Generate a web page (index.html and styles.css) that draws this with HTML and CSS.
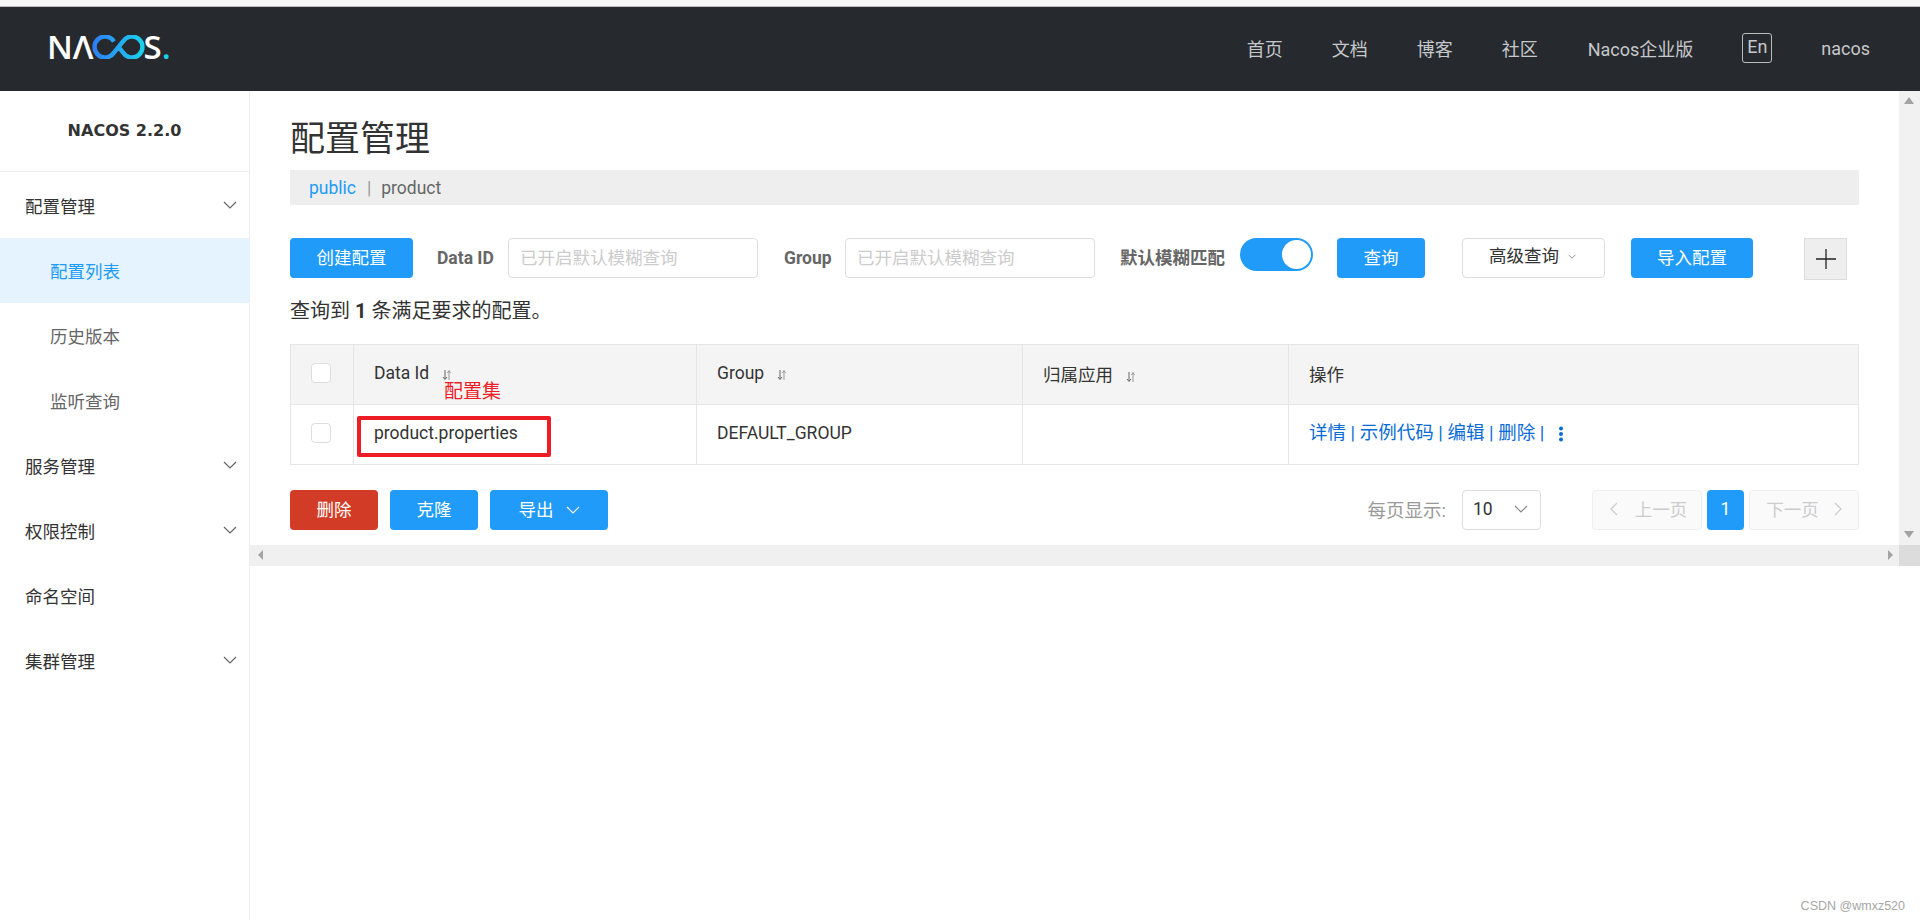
FILE: index.html
```html
<!DOCTYPE html>
<html lang="zh-CN">
<head>
  <meta charset="UTF-8" />
  <title>配置管理 - Nacos</title>
  <link rel="stylesheet" href="styles.css">
</head>
<body>
  <svg class="sprites" width="0" height="0">
    <symbol id="chevron" viewBox="0 0 14 8"><path d="M1 1l6 6 6-6" fill="none" stroke="currentColor" stroke-width="1.2"/></symbol>
    <symbol id="sort" viewBox="0 0 10 12"><path d="M3 1v9M1 8l2 2.5L5 8" fill="none" stroke="#666" stroke-width="1"/><path d="M7 11V2M5.4 4L7 1.5 8.6 4" fill="none" stroke="#999" stroke-width="1"/></symbol>
  </svg>

  <div class="top-strip"></div>

  <header class="header">
    <a class="logo">
      <span>N</span><span>Λ</span>
      <svg class="logo-loop" width="53" height="24" viewBox="0 0 53 24">
        <defs>
          <linearGradient id="loop" x1="0" y1="0" x2="1" y2="0">
            <stop offset="0" stop-color="#2e7ff5"/>
            <stop offset="1" stop-color="#1cd0ec"/>
          </linearGradient>
        </defs>
        <path d="M22 6.500A10.500 10.500 0 1 0 22 17.500L31 6.500A10.500 10.500 0 1 1 31 17.500L27.500 13.200" fill="none" stroke="url(#loop)" stroke-width="4.400"/>
      </svg>
      <span>S</span><span class="logo-dot">.</span>
    </a>
    <nav class="nav">
      <a class="nav-home">首页</a>
      <a class="nav-docs">文档</a>
      <a class="nav-blog">博客</a>
      <a class="nav-community">社区</a>
      <a class="nav-enterprise">Nacos企业版</a>
      <a class="nav-lang">En</a>
      <a class="nav-user">nacos</a>
    </nav>
  </header>

  <div class="layout">
    <aside class="sidebar">
      <div class="version">NACOS 2.2.0</div>
      <ul class="menu">
        <li class="menu-item">配置管理<svg class="menu-arrow"><use href="#chevron"/></svg></li>
        <li class="menu-item sub active">配置列表</li>
        <li class="menu-item sub">历史版本</li>
        <li class="menu-item sub">监听查询</li>
        <li class="menu-item">服务管理<svg class="menu-arrow"><use href="#chevron"/></svg></li>
        <li class="menu-item">权限控制<svg class="menu-arrow"><use href="#chevron"/></svg></li>
        <li class="menu-item">命名空间</li>
        <li class="menu-item">集群管理<svg class="menu-arrow"><use href="#chevron"/></svg></li>
      </ul>
    </aside>

    <div class="main">
      <div class="viewport">
        <main class="content">
          <h1 class="page-title">配置管理</h1>
          <div class="crumbs">
            <a class="crumb-link">public</a>
            <span class="crumb-sep">|</span>
            <span>product</span>
          </div>

          <div class="toolbar">
            <button class="btn btn-create">创建配置</button>
            <label class="field-label label-id">Data ID</label>
            <div class="input">已开启默认模糊查询</div>
            <label class="field-label label-group">Group</label>
            <div class="input">已开启默认模糊查询</div>
            <label class="field-label label-fuzzy">默认模糊匹配</label>
            <span class="switch"><span class="switch-knob"></span></span>
            <button class="btn btn-query">查询</button>
            <button class="btn-advanced">高级查询<svg class="advanced-arrow"><use href="#chevron"/></svg></button>
            <button class="btn btn-import">导入配置</button>
            <button class="btn-plus">
              <svg width="20" height="20" viewBox="0 0 20 20"><path d="M10 0v20M0 10h20" stroke="#222" stroke-width="1.300"/></svg>
            </button>
          </div>

          <p class="result-count">查询到 <b>1</b> 条满足要求的配置。</p>

          <div class="table-wrap">
            <table class="config-table">
              <colgroup>
                <col class="col-check"><col class="col-id"><col class="col-group"><col class="col-app"><col>
              </colgroup>
              <thead>
                <tr>
                  <th class="cell-check"><span class="checkbox"></span></th>
                  <th>Data Id<svg class="sort"><use href="#sort"/></svg></th>
                  <th>Group<svg class="sort"><use href="#sort"/></svg></th>
                  <th>归属应用<svg class="sort"><use href="#sort"/></svg></th>
                  <th>操作</th>
                </tr>
              </thead>
              <tbody>
                <tr>
                  <td class="cell-check"><span class="checkbox"></span></td>
                  <td>product.properties</td>
                  <td>DEFAULT_GROUP</td>
                  <td></td>
                  <td class="actions">
                    <a>详情</a> | <a>示例代码</a> | <a>编辑</a> | <a>删除</a> |
                    <svg class="kebab" width="6" height="16" viewBox="0 0 6 16"><circle cx="3" cy="2.500" r="2"/><circle cx="3" cy="8" r="2"/><circle cx="3" cy="13.500" r="2"/></svg>
                  </td>
                </tr>
              </tbody>
            </table>
            <!-- 标注 -->
            <span class="mark-label">配置集</span>
            <span class="mark-box"></span>
          </div>

          <div class="table-foot">
            <button class="btn btn-danger">删除</button>
            <button class="btn btn-clone">克隆</button>
            <button class="btn btn-export">导出<svg class="export-arrow"><use href="#chevron"/></svg></button>
            <span class="page-size-label">每页显示:</span>
            <span class="page-size">10<svg class="page-size-arrow"><use href="#chevron"/></svg></span>
            <button class="page-btn page-prev"><svg class="page-arrow" viewBox="0 0 8 14"><path d="M7 1L1 7l6 6" fill="none" stroke="currentColor" stroke-width="1.200"/></svg>上一页</button>
            <button class="btn page-current">1</button>
            <button class="page-btn page-next">下一页<svg class="page-arrow" viewBox="0 0 8 14"><path d="M1 1l6 6-6 6" fill="none" stroke="currentColor" stroke-width="1.200"/></svg></button>
          </div>
        </main>
        <div class="vscroll">
          <span class="tri tri-up"></span>
          <span class="tri tri-down"></span>
        </div>
      </div>
      <div class="hscroll">
        <span class="tri tri-left"></span>
        <span class="tri tri-right"></span>
        <span class="scroll-corner"></span>
      </div>
      <div class="watermark">CSDN @wmxz520</div>
    </div>
  </div>
</body>
</html>
```

FILE: styles.css
```css
* {
  box-sizing: border-box;
}
html, body {
  height: 100%;
}
body {
  margin: 0;
  display: flex;
  flex-direction: column;
  overflow: hidden;
  font-family: Roboto, "Noto Sans CJK SC", sans-serif;
  font-size: 17.5px;
  color: #333;
  background: #fff;
}
.sprites {
  position: absolute;
}
button {
  font: inherit;
  cursor: pointer;
}

.top-strip {
  height: 7px;
  flex: none;
  background: #f6f6f6;
  border-bottom: 1px solid #bbb;
}

/* 顶部导航 */
.header {
  height: 84px;
  flex: none;
  display: flex;
  align-items: center;
  background: #262a2f;
  color: #c6c8ca;
}
.logo {
  display: flex;
  align-items: center;
  margin: 0 0 4px 47px;
  height: 24px;
  font-family: "Open Sans", sans-serif;
  font-weight: 600;
  font-size: 33px;
  line-height: 24px;
  color: #fff;
}
.logo-loop {
  margin: 0 -1px 0 -2px;
  flex: none;
}
.logo-dot {
  color: #1cd0ec;
}
.nav {
  margin: 0 0 2px auto;
  display: flex;
  align-items: center;
  font-size: 18px;
  padding-right: 50px;
}
.nav-docs, .nav-blog, .nav-community {
  margin-left: 49px;
}
.nav-enterprise {
  margin-left: 50px;
}
.nav-lang {
  margin-left: 49px;
  width: 30px;
  height: 30px;
  line-height: 26px;
  text-align: center;
  border: 1px solid #bbb;
  border-radius: 3px;
}
.nav-user {
  margin-left: 49px;
}

.layout {
  flex: 1;
  display: flex;
  min-height: 0;
}

/* 侧边栏 */
.sidebar {
  width: 250px;
  flex: none;
  border-right: 1px solid #eee;
}
.version {
  height: 81px;
  line-height: 79px;
  text-align: center;
  font-family: "DejaVu Sans", sans-serif;
  font-weight: bold;
  font-size: 16px;
  color: #333;
  border-bottom: 1px solid #eee;
}
.menu {
  list-style: none;
  margin: 0;
  padding: 1px 0 0;
}
.menu-item {
  height: 65px;
  display: flex;
  align-items: center;
  justify-content: space-between;
  padding: 0 12px 1px 25px;
  color: #333;
}
.menu-item.sub {
  padding-left: 50px;
  color: #666;
}
.menu-item.active {
  background: #e4f3fe;
  color: #209bfa;
}
.menu-arrow {
  width: 14px;
  height: 8px;
  color: #666;
}

.main {
  flex: 1;
  min-width: 0;
  position: relative;
}
.viewport {
  height: 454px;
  display: flex;
}
.content {
  flex: 1;
  min-width: 0;
  padding: 0 40px;
}
.page-title {
  margin: 0;
  height: 79px;
  line-height: 97px;
  font-size: 35px;
  font-weight: 400;
  color: #333;
}
.crumbs {
  height: 35px;
  display: flex;
  align-items: center;
  padding-left: 19px;
  background: #eee;
  color: #666;
}
.crumb-link {
  color: #209bfa;
}
.crumb-sep {
  margin: 0 10px 0 11px;
  color: #999;
}

/* 查询栏 */
.toolbar {
  display: flex;
  align-items: flex-start;
  margin-top: 33px;
  height: 42px;
}
.btn {
  height: 40px;
  border: none;
  border-radius: 4px;
  background: #209bfa;
  color: #fff;
  padding: 0 0 3px;
}
.btn-create {
  width: 123px;
}
.field-label {
  height: 40px;
  line-height: 40px;
  font-weight: bold;
  color: #666;
  flex: none;
}
.label-id {
  width: 71px;
  margin-left: 24px;
}
.label-group {
  width: 61px;
  margin-left: 26px;
}
.label-fuzzy {
  width: 120px;
  margin-left: 25px;
}
.input {
  width: 250px;
  height: 40px;
  line-height: 38px;
  padding-left: 11px;
  border: 1px solid #ddd;
  border-radius: 4px;
  color: #ccc;
  flex: none;
}
.switch {
  width: 73px;
  height: 33px;
  flex: none;
  border-radius: 17px;
  background: #209bfa;
  padding: 2px;
  display: flex;
  justify-content: flex-end;
}
.switch-knob {
  width: 29px;
  height: 29px;
  border-radius: 50%;
  background: #fff;
}
.btn-query {
  width: 88px;
  margin-left: 24px;
}
.btn-advanced {
  width: 143px;
  height: 40px;
  margin-left: 37px;
  border: 1px solid #ddd;
  border-radius: 4px;
  background: #fff;
  color: #333;
  padding: 0 2px 8px 0;
}
.advanced-arrow {
  width: 8px;
  height: 5px;
  margin-left: 9px;
  vertical-align: 3px;
  color: #666;
}
.btn-import {
  width: 122px;
  margin-left: 26px;
}
.btn-plus {
  width: 43px;
  height: 42px;
  margin-left: 51px;
  padding: 0;
  border: 1px solid #ddd;
  background: #eee;
  display: flex;
  align-items: center;
  justify-content: center;
}

.result-count {
  margin: 19px 0 0;
  height: 45px;
  line-height: 24px;
  font-size: 20px;
}

/* 表格 */
.table-wrap {
  position: relative;
}
.config-table {
  width: 100%;
  table-layout: fixed;
  border-collapse: collapse;
}
.col-check {
  width: 63px;
}
.col-id {
  width: 343px;
}
.col-group {
  width: 326px;
}
.col-app {
  width: 266px;
}
.config-table th, .config-table td {
  height: 60px;
  padding: 0 20px 3px;
  border: 1px solid #e6e6e6;
  text-align: left;
  font-weight: 400;
  color: #333;
}
.config-table th {
  background: #f4f4f4;
}
.config-table .cell-check {
  padding: 0 0 4px 20px;
}
.checkbox {
  display: block;
  width: 20px;
  height: 20px;
  background: #fff;
  border: 1px solid #ddd;
  border-radius: 4px;
}
.sort {
  width: 10px;
  height: 12px;
  margin-left: 13px;
  vertical-align: -2px;
}
.config-table .actions {
  padding-bottom: 7px;
}
.config-table .actions, .actions a {
  color: #0a6cd6;
  font-size: 18.5px;
}
.kebab {
  margin-left: 9px;
  vertical-align: -3px;
  fill: #0a6cd6;
}
.mark-label {
  position: absolute;
  left: 154px;
  top: 36px;
  font-size: 19px;
  line-height: 24px;
  color: #ee1c25;
}
.mark-box {
  position: absolute;
  left: 67px;
  top: 72px;
  width: 194px;
  height: 41px;
  border: 4px solid #ee1c25;
  border-radius: 2px;
}

/* 表格底部 */
.table-foot {
  display: flex;
  align-items: center;
  margin-top: 25px;
  height: 40px;
}
.btn-danger {
  width: 88px;
  background: #d23c26;
}
.btn-clone {
  width: 88px;
  margin-left: 12px;
}
.btn-export {
  width: 118px;
  margin-left: 12px;
}
.export-arrow {
  width: 14px;
  height: 8px;
  margin-left: 12px;
  vertical-align: 2px;
}
.page-size-label {
  margin: 0 0 3px auto;
  font-size: 18.5px;
  color: #999;
}
.page-size {
  width: 79px;
  height: 40px;
  margin-left: 16px;
  padding: 0 12px 3px 10px;
  display: flex;
  align-items: center;
  justify-content: space-between;
  border: 1px solid #ddd;
  border-radius: 4px;
}
.page-size-arrow {
  width: 14px;
  height: 8px;
  color: #888;
}
.page-btn {
  width: 110px;
  height: 40px;
  padding: 0 0 3px;
  display: flex;
  align-items: center;
  justify-content: center;
  border: 1px solid #eee;
  border-radius: 4px;
  background: #fafafa;
  color: #ccc;
}
.page-prev {
  margin-left: 51px;
  gap: 17px;
  padding-left: 3px;
}
.page-next {
  gap: 15px;
}
.page-arrow {
  width: 8px;
  height: 14px;
}
.page-current {
  width: 37px;
  margin: 0 5px;
}

/* 滚动条 */
.vscroll {
  position: relative;
  width: 21px;
  flex: none;
  background: #f1f1f1;
}
.hscroll {
  position: relative;
  height: 21px;
  background: #f0f0f0;
}
.scroll-corner {
  position: absolute;
  right: 0;
  top: 0;
  width: 21px;
  height: 21px;
  background: #dcdcdc;
}
.tri {
  position: absolute;
  width: 0;
  height: 0;
  border: 5px solid transparent;
}
.tri-up {
  top: 6px;
  left: 5px;
  border-top: 0;
  border-bottom: 7px solid #a3a3a3;
}
.tri-down {
  bottom: 7px;
  left: 5px;
  border-bottom: 0;
  border-top: 7px solid #a3a3a3;
}
.tri-left {
  left: 8px;
  top: 5px;
  border-left: 0;
  border-right: 5px solid #a3a3a3;
}
.tri-right {
  right: 27px;
  top: 5px;
  border-right: 0;
  border-left: 5px solid #a3a3a3;
}
.watermark {
  position: absolute;
  right: 15px;
  bottom: 7px;
  font-family: "Liberation Sans", sans-serif;
  font-size: 12.5px;
  color: #a6a6a6;
}
```
